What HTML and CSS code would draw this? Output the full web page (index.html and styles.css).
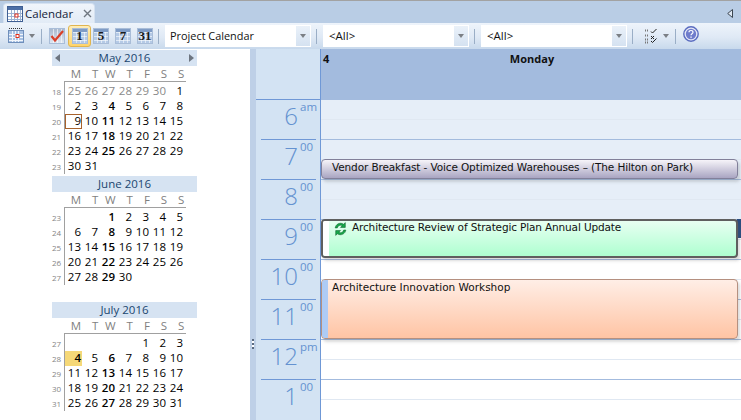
FILE: index.html
```html
<!DOCTYPE html>
<html lang="en">
<head>
<meta charset="utf-8">
<title>Calendar</title>
<link rel="stylesheet" href="styles.css">
</head>
<body>
<div class="app">
  <div class="tabstrip">
    <div class="tab">
      <svg class="tabicon" width="16" height="16" viewBox="0 0 16 16"><rect x=".5" y=".5" width="15" height="15" fill="#fff" stroke="#3f5f93"/><rect x="1" y="1" width="14" height="3" fill="#4d6fa6"/><path d="M1 7.500h14M1 10.500h14M1 13.500h14M4.500 4v11M7.500 4v11M10.500 4v11M13.500 4v11" stroke="#9db4d4" fill="none"/><rect x="8" y="8" width="3" height="3" fill="#fff" stroke="#e0301e"/></svg>
      <span class="tablabel">Calendar</span>
      <svg class="tabclose" width="9" height="9" viewBox="0 0 9 9"><path d="M1 1l7 7M8 1l-7 7" stroke="#6f7780" stroke-width="1.400" fill="none"/></svg>
    </div>
    <svg class="collapse" width="6" height="9" viewBox="0 0 6 9"><path d="M5.500 .5v8L.7 4.500z" fill="#dfe8f3" stroke="#3c4650"/></svg>
  </div>

  <div class="toolbar">
    <svg class="viewicon" width="16" height="16" viewBox="0 0 16 16"><path d="M1 1.500h14" stroke="#333" stroke-dasharray="1 1"/><rect x=".5" y="3.500" width="15" height="12" fill="#a9c2e4" stroke="#6f8fbb"/><path d="M1 7.500h14M1 10.500h14M1 13.500h14M4.500 4v11M7.500 4v11M10.500 4v11" stroke="#f2f6fb" fill="none"/><rect x="8" y="7.500" width="3" height="3" fill="#fff" stroke="#e0301e"/></svg>
    <span class="arrow arrow-a"></span>
    <span class="sep sep-a"></span>
    <span class="calbtn calbtn-check"><svg width="14" height="14" viewBox="0 0 14 14"><path d="M1.500 7l3.500 4.500L13 2" stroke="#d9402a" stroke-width="2.200" fill="none"/></svg></span>
    <span class="selbtn"><span class="calbtn">1</span></span>
    <span class="calbtn calbtn-five">5</span>
    <span class="calbtn calbtn-next">7</span>
    <span class="calbtn calbtn-next">31</span>
    <span class="sep sep-b"></span>
    <span class="combo combo-first"><span class="combotext">Project Calendar</span><span class="combobtn"><span class="arrow"></span></span></span>
    <span class="sep sep-c"></span>
    <span class="combo"><span class="combotext">&lt;All&gt;</span><span class="combobtn"><span class="arrow"></span></span></span>
    <span class="sep sep-c"></span>
    <span class="combo"><span class="combotext">&lt;All&gt;</span><span class="combobtn"><span class="arrow"></span></span></span>
    <span class="sep sep-d"></span>
    <svg class="checklist" width="13" height="15" viewBox="0 0 13 15"><path d="M0 1.500h4M0 6.500h4M0 10.500h4M0 13.500h4" stroke="#777" stroke-width="2" stroke-dasharray="1 1" fill="none"/><path d="M6 2.500l1.500 1.500L11.500 0M6 7l3 3M9 7l-3 3M6 12l1.500 1.500 4-4" stroke="#222" fill="none"/></svg>
    <span class="arrow arrow-b"></span>
    <span class="sep sep-e"></span>
    <svg class="help" width="16" height="16" viewBox="0 0 16 16"><circle cx="8" cy="8" r="7.200" fill="#e6e8f6" stroke="#5a6cc0" stroke-width="1.400"/><circle cx="8" cy="8" r="5.200" fill="#6f7ccc"/><path d="M6 6.300c0-2.400 4-2.400 4 0 0 1.500-2 1.400-2 3" stroke="#fff" stroke-width="1.200" fill="none"/><rect x="7.400" y="10.500" width="1.300" height="1.300" fill="#fff"/></svg>
  </div>

  <div class="main">
    <aside class="sidebar">
      <section class="month">
        <header class="mhead"><span class="nav nav-prev"></span><span class="mtitle">May 2016</span><span class="nav nav-next"></span></header>
        <div class="weekdays"><span>M</span><span>T</span><span>W</span><span>T</span><span>F</span><span>S</span><span>S</span></div>
        <div class="weeks">
          <div class="wks"><span>18</span><span>19</span><span>20</span><span>21</span><span>22</span><span>23</span></div>
          <div class="days">
            <span class="o">25</span><span class="o">26</span><span class="o">27</span><span class="o">28</span><span class="o">29</span><span class="o">30</span><span>1</span>
            <span>2</span><span>3</span><b>4</b><span>5</span><span>6</span><span>7</span><span>8</span>
            <span class="sel">9</span><span>10</span><b>11</b><span>12</span><span>13</span><span>14</span><span>15</span>
            <span>16</span><span>17</span><b>18</b><span>19</span><span>20</span><span>21</span><span>22</span>
            <span>23</span><span>24</span><b>25</b><span>26</span><span>27</span><span>28</span><span>29</span>
            <span>30</span><span>31</span>
          </div>
        </div>
      </section>
      <section class="month">
        <header class="mhead"><span class="mtitle">June 2016</span></header>
        <div class="weekdays"><span>M</span><span>T</span><span>W</span><span>T</span><span>F</span><span>S</span><span>S</span></div>
        <div class="weeks">
          <div class="wks"><span>23</span><span>24</span><span>25</span><span>26</span><span>27</span></div>
          <div class="days">
            <span></span><span></span><b>1</b><span>2</span><span>3</span><span>4</span><span>5</span>
            <span>6</span><span>7</span><b>8</b><span>9</span><span>10</span><span>11</span><span>12</span>
            <span>13</span><span>14</span><b>15</b><span>16</span><span>17</span><span>18</span><span>19</span>
            <span>20</span><span>21</span><b>22</b><span>23</span><span>24</span><span>25</span><span>26</span>
            <span>27</span><span>28</span><b>29</b><span>30</span>
          </div>
        </div>
      </section>
      <section class="month">
        <header class="mhead"><span class="mtitle">July 2016</span></header>
        <div class="weekdays"><span>M</span><span>T</span><span>W</span><span>T</span><span>F</span><span>S</span><span>S</span></div>
        <div class="weeks">
          <div class="wks"><span>27</span><span>28</span><span>29</span><span>30</span><span>31</span></div>
          <div class="days">
            <span></span><span></span><span></span><span></span><span>1</span><span>2</span><span>3</span>
            <b class="today">4</b><span>5</span><b>6</b><span>7</span><span>8</span><span>9</span><span>10</span>
            <span>11</span><span>12</span><b>13</b><span>14</span><span>15</span><span>16</span><span>17</span>
            <span>18</span><span>19</span><b>20</b><span>21</span><span>22</span><span>23</span><span>24</span>
            <span>25</span><span>26</span><b>27</b><span>28</span><span>29</span><span>30</span><span>31</span>
          </div>
        </div>
      </section>
    </aside>

    <div class="splitter"><span class="grip"></span></div>

    <div class="timecol">
      <div class="timehead"></div>
      <div class="hour hour-first"><span class="hnum">6</span><span class="hsup">am</span></div>
      <div class="hour"><span class="hnum">7</span><span class="hsup">00</span></div>
      <div class="hour"><span class="hnum">8</span><span class="hsup">00</span></div>
      <div class="hour"><span class="hnum">9</span><span class="hsup">00</span></div>
      <div class="hour"><span class="hnum">10</span><span class="hsup">00</span></div>
      <div class="hour"><span class="hnum">11</span><span class="hsup">00</span></div>
      <div class="hour"><span class="hnum">12</span><span class="hsup">pm</span></div>
      <div class="hour"><span class="hnum">1</span><span class="hsup">00</span></div>
    </div>

    <div class="day">
      <div class="dayhead"><span class="daynum">4</span><span class="dayname">Monday</span></div>
      <div class="slots">
        <div class="slot off"></div>
        <div class="slot off"></div>
        <div class="slot off"></div>
        <div class="slot"></div>
        <div class="slot"></div>
        <div class="slot"></div>
        <div class="slot"></div>
        <div class="slot"></div>
        <span class="selection"></span>
        <div class="event vendor"><span class="etitle">Vendor Breakfast - Voice Optimized Warehouses – (The Hilton on Park)</span></div>
        <div class="event review"><span class="estrip"></span><svg class="recur" width="15" height="16" viewBox="0 0 14 15"><path d="M2 6.500C2.500 3 6.500 .8 10 3l1.500-1.500v4.500H7l1.600-1.600C6.500 3.200 4.500 4.500 4 6.500z" fill="#18a84a" stroke="#0a5a28" stroke-width=".5"/><path d="M12 8.500C11.500 12 7.500 14.200 4 12l-1.500 1.500V9H7l-1.600 1.600c2.100 1.200 4.100-.1 4.600-2.100z" fill="#18a84a" stroke="#0a5a28" stroke-width=".5"/></svg><span class="etitle">Architecture Review of Strategic Plan Annual Update</span></div>
        <div class="event workshop"><span class="estrip"></span><span class="etitle">Architecture Innovation Workshop</span></div>
      </div>
    </div>
  </div>
</div>
</body>
</html>
```
FILE: styles.css
```css
* { box-sizing: border-box; }
html, body { margin: 0; height: 100%; overflow: hidden; }
body { background: #fff; font-family: "Open Sans", "Noto Sans", sans-serif; color: #000; }
.app { width: 741px; height: 420px; display: flex; flex-direction: column; overflow: hidden; }

/* tab strip */
.tabstrip { height: 23px; flex: none; background: #b9cde5; border-top: 1px solid #a2a2a2; padding: 2px 8px 0 3px; display: flex; align-items: flex-start; justify-content: space-between; }
.tab { width: 92px; height: 20px; background: linear-gradient(#f0f5fb, #e2ebf6); border-radius: 4px 4px 0 0; border: 1px solid #d5e1f0; border-bottom: 0; display: flex; align-items: center; padding: 0 0 0 3px; }
.tabicon { flex: none; }
.tablabel { font-size: 11.5px; margin-left: 2px; color: #14233a; line-height: 18px; }
.tabclose { flex: none; margin-left: 10px; }
.collapse { margin-top: 6px; }

/* toolbar */
.toolbar { height: 26px; flex: none; background: linear-gradient(#eef4fb, #dfe9f5 55%, #c8d9ec); display: flex; align-items: center; padding-left: 8px; }
.viewicon { flex: none; margin-top: -2px; }
.arrow { width: 0; height: 0; border: 3px solid transparent; border-top: 4px solid #7b7f85; border-bottom: 0; flex: none; display: block; }
.arrow-a { margin-left: 5px; }
.arrow-b { margin-left: 5px; }
.sep { width: 1px; height: 15px; background: #9aaec6; flex: none; }
.sep-a { margin-left: 6px; margin-right: 7px; }
.sep-b { margin-left: 5px; margin-right: 6px; }
.sep-c { margin-left: 5px; margin-right: 6px; }
.sep-d { margin-left: 5px; margin-right: 12px; }
.sep-e { margin-left: 6px; margin-right: 7px; }
.calbtn { width: 16px; height: 16px; flex: none; display: flex; align-items: center; justify-content: center; background: linear-gradient(#7f9cc6 0 3px, transparent 3px), repeating-linear-gradient(90deg, transparent 0 3px, rgba(255,255,255,.55) 3px 4px), repeating-linear-gradient(#b5cae6 0 3px, #dfe9f5 3px 4px); border: 1px solid #a9bdd8; font: bold 13px/14px "Liberation Serif", serif; color: #1a1a1a; }
.calbtn-check { background: repeating-linear-gradient(90deg, transparent 0 3px, rgba(255,255,255,.6) 3px 4px), linear-gradient(#aab9cf, #dfe7f2); }
.selbtn { width: 23px; height: 22px; margin: 0 2px 0 3px; flex: none; display: flex; align-items: center; justify-content: center; border: 1px solid #e0b550; border-radius: 3px; background: linear-gradient(#ffeeb8, #ffd46a); }
.calbtn-next { margin-left: 6px; }
.combo { width: 146px; height: 22px; flex: none; background: #fff; display: flex; align-items: stretch; padding: 1px; }
.combotext { flex: 1; font-size: 11.5px; line-height: 19px; padding-left: 5px; color: #111; white-space: nowrap; }
.combo-first .combotext { font-size: 10.9px; padding-left: 4px; }
.combobtn { width: 14px; background: linear-gradient(#eaf1f9, #d5e2f1); display: flex; align-items: center; justify-content: center; }
.checklist { flex: none; }
.help { flex: none; margin-top: -4px; }

/* main */
.main { flex: 1; min-height: 0; display: flex; }
.sidebar { width: 250px; flex: none; background: #fff; padding: 1px 0 0 52px; }
.month { height: 126px; }
.mhead { width: 145px; height: 16px; background: #d6e3f2; display: flex; align-items: center; justify-content: center; position: relative; }
.mtitle { font-size: 11.5px; color: #20466f; line-height: 16px; }
.nav { position: absolute; top: 4px; width: 0; height: 0; border: 4px solid transparent; }
.nav-prev { left: 3px; border-left: 0; border-right: 5px solid #6d7580; }
.nav-next { right: 3px; border-right: 0; border-left: 5px solid #6d7580; }
.weekdays { margin-left: 12px; width: 122px; height: 16px; border-bottom: 1px solid #a0a0a0; display: grid; grid-template-columns: repeat(7, 17.2px); font-size: 11.5px; line-height: 15px; color: #7f7f7f; text-align: right; }
.weeks { display: flex; }
.wks { width: 12px; flex: none; padding-top: 2px; display: grid; grid-auto-rows: 15px; font-size: 8px; line-height: 15px; color: #858585; }
.days { border-left: 1px solid #a0a0a0; padding-top: 2px; display: grid; grid-template-columns: repeat(7, 17px); grid-auto-rows: 15px; font-size: 11.5px; line-height: 14px; text-align: right; }
.days span, .days b { padding-right: 1px; display: block; }
.days b { font-weight: 600; }
.days .o { color: #8a8a8a; }
.days .sel { border: 1px solid #a8622c; padding-right: 0; line-height: 12px; }
.days .today { background: #f5d878; }

.splitter { width: 6px; flex: none; background: #bed0e7; position: relative; }
.grip { position: absolute; left: 2px; top: 290px; width: 2px; height: 10px; background: repeating-linear-gradient(#5a6a80 0 2px, #fff 2px 4px); }

/* time ruler */
.timecol { width: 65px; flex: none; background: #d3e3f3; border-right: 1px solid #6f98d6; display: flex; flex-direction: column; color: #6492d0; }
.timehead { height: 50px; flex: none; }
.hour { height: 40px; flex: none; margin-left: 5px; margin-right: 4px; border-top: 1px solid #6f98d6; position: relative; display: flex; justify-content: flex-end; padding-right: 2px; font-weight: 300; }
.hour-first { margin-left: 0; margin-right: 0; padding-right: 6px; }
.hnum { font-size: 24px; line-height: 31px; position: relative; }
.hsup { font-size: 11.5px; line-height: 12px; width: 14px; margin-left: 2px; margin-top: 1px; text-align: left; font-weight: 400; }

/* day column */
.day { flex: 1; min-width: 0; display: flex; flex-direction: column; }
.dayhead { height: 50px; flex: none; background: #a3bbde; position: relative; text-align: center; font-weight: 700; font-size: 11px; line-height: 20px; color: #111; }
.daynum { position: absolute; left: 2px; top: 0; }
.dayname { display: block; margin-left: 2px; }
.slots { flex: 1; position: relative; display: flex; flex-direction: column; }
.slot { height: 40px; flex: none; background: #fff; border-top: 1px solid #a3bbde; position: relative; background-image: linear-gradient(#e0e8f2, #e0e8f2); background-size: 100% 1px; background-position: 0 19px; background-repeat: no-repeat; }
.slot.off { background-color: #e6eef8; }
.selection { position: absolute; left: 416px; top: 120px; width: 4px; height: 19px; background: #2a4d80; }
.event { position: absolute; left: 0; width: 417px; display: flex; overflow: hidden; box-shadow: 2px 3px 3px rgba(90,90,90,.22); font-family: "DejaVu Sans", sans-serif; font-size: 10.5px; color: #111; border-radius: 4px; }
.etitle { white-space: nowrap; line-height: 15px; }
.estrip { width: 6px; flex: none; margin: 0 5px 0 0; align-self: stretch; }
.vendor { top: 60px; height: 20px; border: 1px solid #82809a; background: linear-gradient(#f6f4f9, #a9a5c2); padding: 0 0 0 10px; }
.vendor .etitle { letter-spacing: -.12px; }
.review { top: 120px; width: 417px; height: 39px; border: 2px solid #5f5f5f; background: linear-gradient(#e8fff2, #aeffd0); }
.review .etitle { letter-spacing: -.14px; margin-top: -1px; }
.review .estrip { background: #fff; margin-right: 0; }
.recur { flex: none; margin-left: 4px; margin-right: 4px; }
.workshop { top: 180px; height: 60px; border: 1px solid #b59080; background: linear-gradient(#ffeee6, #ffc4a4); }
.workshop .estrip { background: #aecbf5; margin-right: 4px; }
```
